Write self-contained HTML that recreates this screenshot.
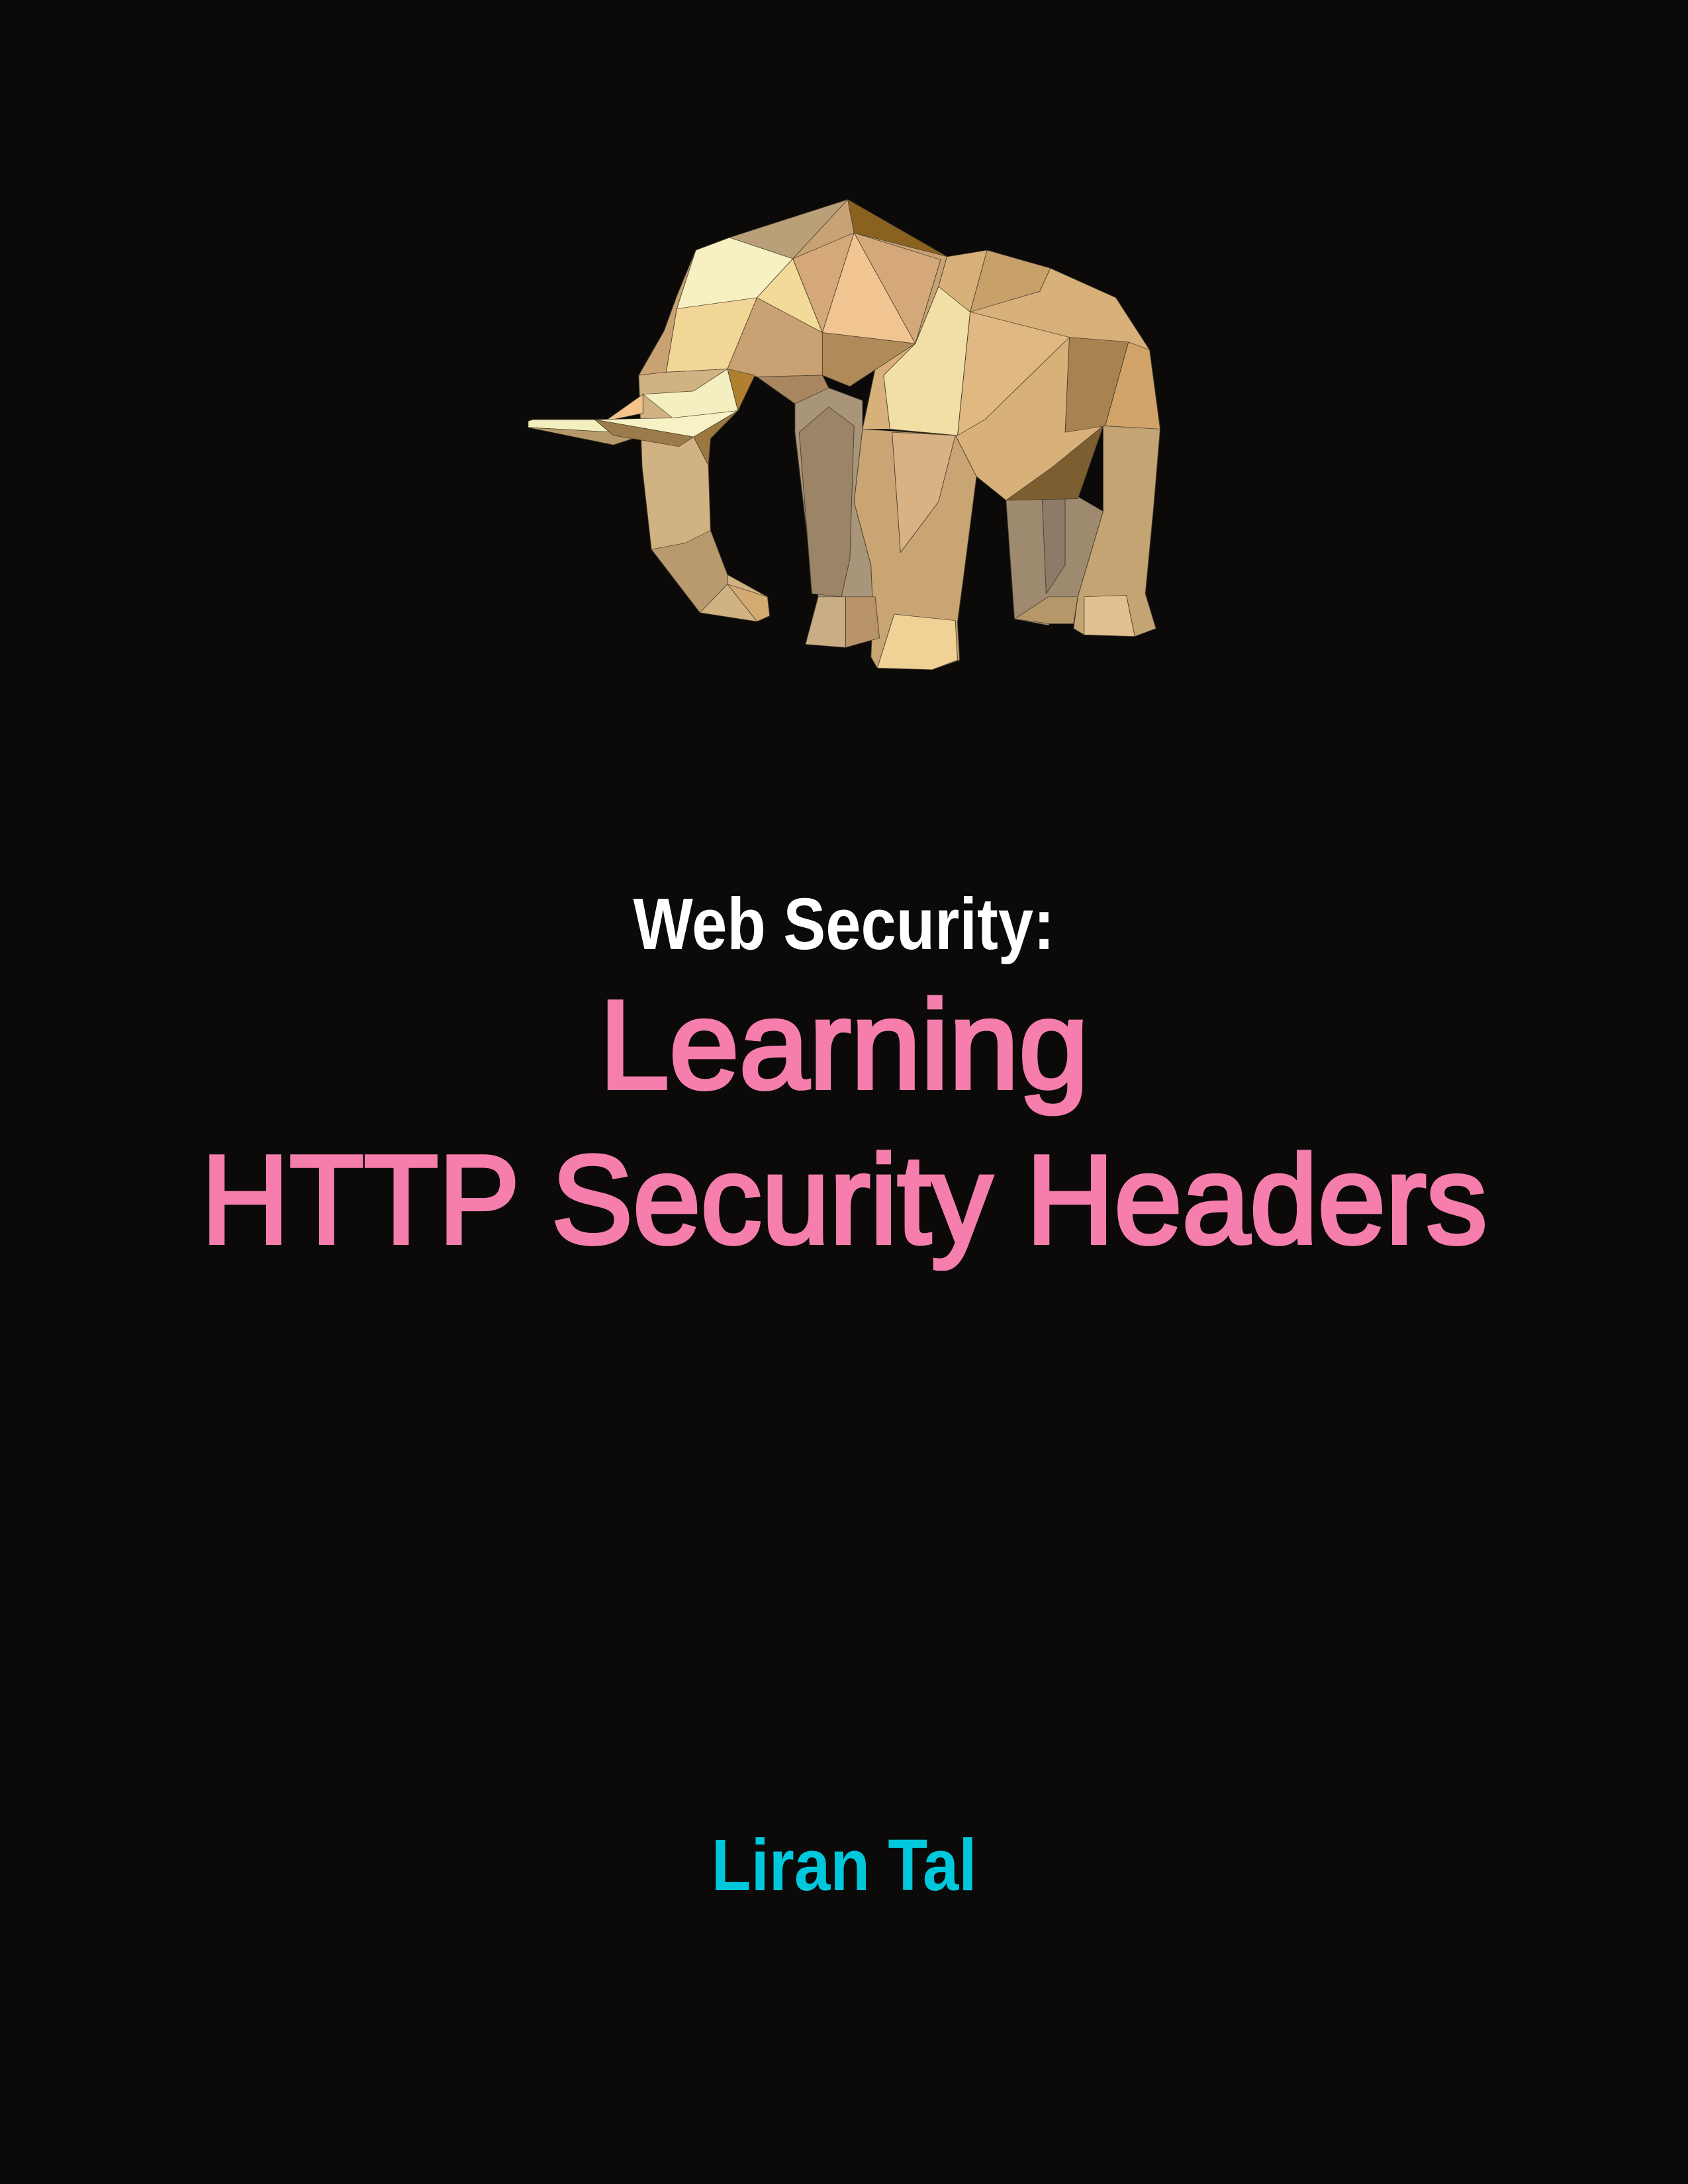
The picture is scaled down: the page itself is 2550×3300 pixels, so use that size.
<!DOCTYPE html>
<html><head><meta charset="utf-8"><style>
html,body{margin:0;padding:0;background:#0b0a09;}
body{width:2550px;height:3300px;position:relative;overflow:hidden;font-family:"Liberation Sans",sans-serif;}
.t{position:absolute;left:0;width:2550px;text-align:center;line-height:1;white-space:nowrap;}
.t span{display:inline-block;}
</style></head><body>
<svg style="position:absolute;left:780px;top:280px" width="1000" height="750" viewBox="0 0 1568 1568" preserveAspectRatio="none">
<g stroke="#4a4030" stroke-width="1.5" stroke-linejoin="round">
<polygon fill="#a8957a" points="660,690 740,640 820,680 820,770 800,1000 840,1200 850,1350 860,1430 780,1460 685,1450 715,1300 690,1120 660,780"/>
<polygon fill="#9c8466" points="740,700 800,760 790,1180 770,1300 700,1290 690,1120 670,780"/>
<polygon fill="#9e8a6e" points="1160,995 1300,960 1390,1030 1330,1300 1260,1390 1180,1370"/>
<polygon fill="#8e7a66" points="1245,975 1300,965 1300,1200 1255,1290"/>
<polygon fill="#d8b07a" points="1000,230 1115,205 1265,262 1420,355 1500,520 1525,770 1390,760 1330,990 1160,995 1090,920 1040,790 880,770 820,770 850,580 945,500"/>
<polygon fill="#e0b882" points="1075,400 1310,480 1110,740 1045,790"/>
<polygon fill="#a8834f" points="1310,480 1450,495 1395,760 1300,780"/>
<polygon fill="#d2a46a" points="1450,495 1500,520 1525,770 1395,760"/>
<polygon fill="#c8a06a" points="1115,205 1265,262 1240,335 1075,400"/>
<polygon fill="#c4a472" points="1390,760 1525,770 1510,1010 1490,1290 1515,1400 1465,1425 1345,1420 1320,1400 1330,1300 1390,1030"/>
<polygon fill="#7d5e30" points="1390,760 1330,990 1160,995 1270,890"/>
<polygon fill="#e0c090" points="1345,1300 1445,1295 1465,1425 1345,1420"/>
<polygon fill="#b5976a" points="1180,1370 1260,1300 1330,1300 1320,1385 1265,1385"/>
<polygon fill="#c9a574" points="820,770 1040,790 1090,920 1060,1230 1045,1380 1050,1500 985,1530 855,1525 840,1490 845,1350 840,1200 800,1000"/>
<polygon fill="#d8b282" points="890,780 1040,790 1000,1000 910,1160"/>
<polygon fill="#f0d296" points="895,1355 1040,1375 1045,1500 985,1530 855,1525"/>
<polygon fill="#c9ad85" points="685,1450 715,1300 780,1300 780,1460"/>
<polygon fill="#b8936a" points="780,1300 850,1300 860,1430 780,1460"/>
<polygon fill="#f2dfa5" points="1000,320 1075,400 1045,790 885,770 870,600 945,500"/>
<polygon fill="#d1b282" points="290,600 355,590 500,580 460,800 455,885 460,1090 500,1230 595,1300 600,1360 570,1378 435,1350 320,1150 298,890"/>
<polygon fill="#b89a6e" points="400,1130 460,1090 500,1230 500,1260 435,1350 320,1150"/>
<polygon fill="#d2aa72" points="500,1260 595,1300 600,1360 570,1378"/>
<polygon fill="#c8a272" points="425,205 505,165 785,45 1020,225 1000,320 945,500 790,635 725,600 570,605 500,580 355,590 290,600 350,460 380,350"/>
<polygon fill="#baa078" points="505,165 785,45 655,232"/>
<polygon fill="#f6f0c2" points="505,165 655,232 570,355 380,390 425,205"/>
<polygon fill="#f2d696" points="380,390 570,355 500,580 355,590"/>
<polygon fill="#f3da98" points="655,232 570,355 725,465"/>
<polygon fill="#d4a878" points="655,232 800,150 1005,235 945,500 725,465"/>
<polygon fill="#f0c592" points="800,150 725,465 945,500"/>
<polygon fill="#8a6220" points="785,45 1020,225 800,150"/>
<polygon fill="#b08a58" points="725,465 945,500 790,635 725,600"/>
<polygon fill="#a88660" points="570,605 725,600 740,640 660,690"/>
<polygon fill="#b08030" points="500,580 565,600 525,712"/>
<polygon fill="#f3efc0" points="300,660 370,735 525,712 500,580 420,650"/>
<polygon fill="#f4c48c" points="210,745 300,660 300,720"/>
<polygon fill="#f3efc0" points="28,745 40,740 185,740 300,760 230,780 28,765"/>
<polygon fill="#b89a6a" points="28,765 230,820 300,790 230,780"/>
<polygon fill="#f6f2c6" points="185,740 370,735 525,712 420,795"/>
<polygon fill="#9c7a4a" points="185,740 420,795 385,825 230,790"/>
<polygon fill="#9a7840" points="525,712 420,795 455,885 460,800"/>
</g>
</svg>
<div class="t" style="top:1342px;font-size:110px;font-weight:bold;color:#ffffff;"><span style="transform:scaleX(0.87)">Web Security:</span></div>
<div class="t" style="top:1484px;font-size:190px;color:#f57ead;-webkit-text-stroke:6px #f57ead;"><span>Learning</span></div>
<div class="t" style="top:1718px;font-size:190px;color:#f57ead;-webkit-text-stroke:6px #f57ead;"><span style="transform:scaleX(0.97)">HTTP Security Headers</span></div>
<div class="t" style="top:2764px;font-size:110px;font-weight:bold;color:#00c8dc;"><span style="transform:scaleX(0.89)">Liran Tal</span></div>
</body></html>
